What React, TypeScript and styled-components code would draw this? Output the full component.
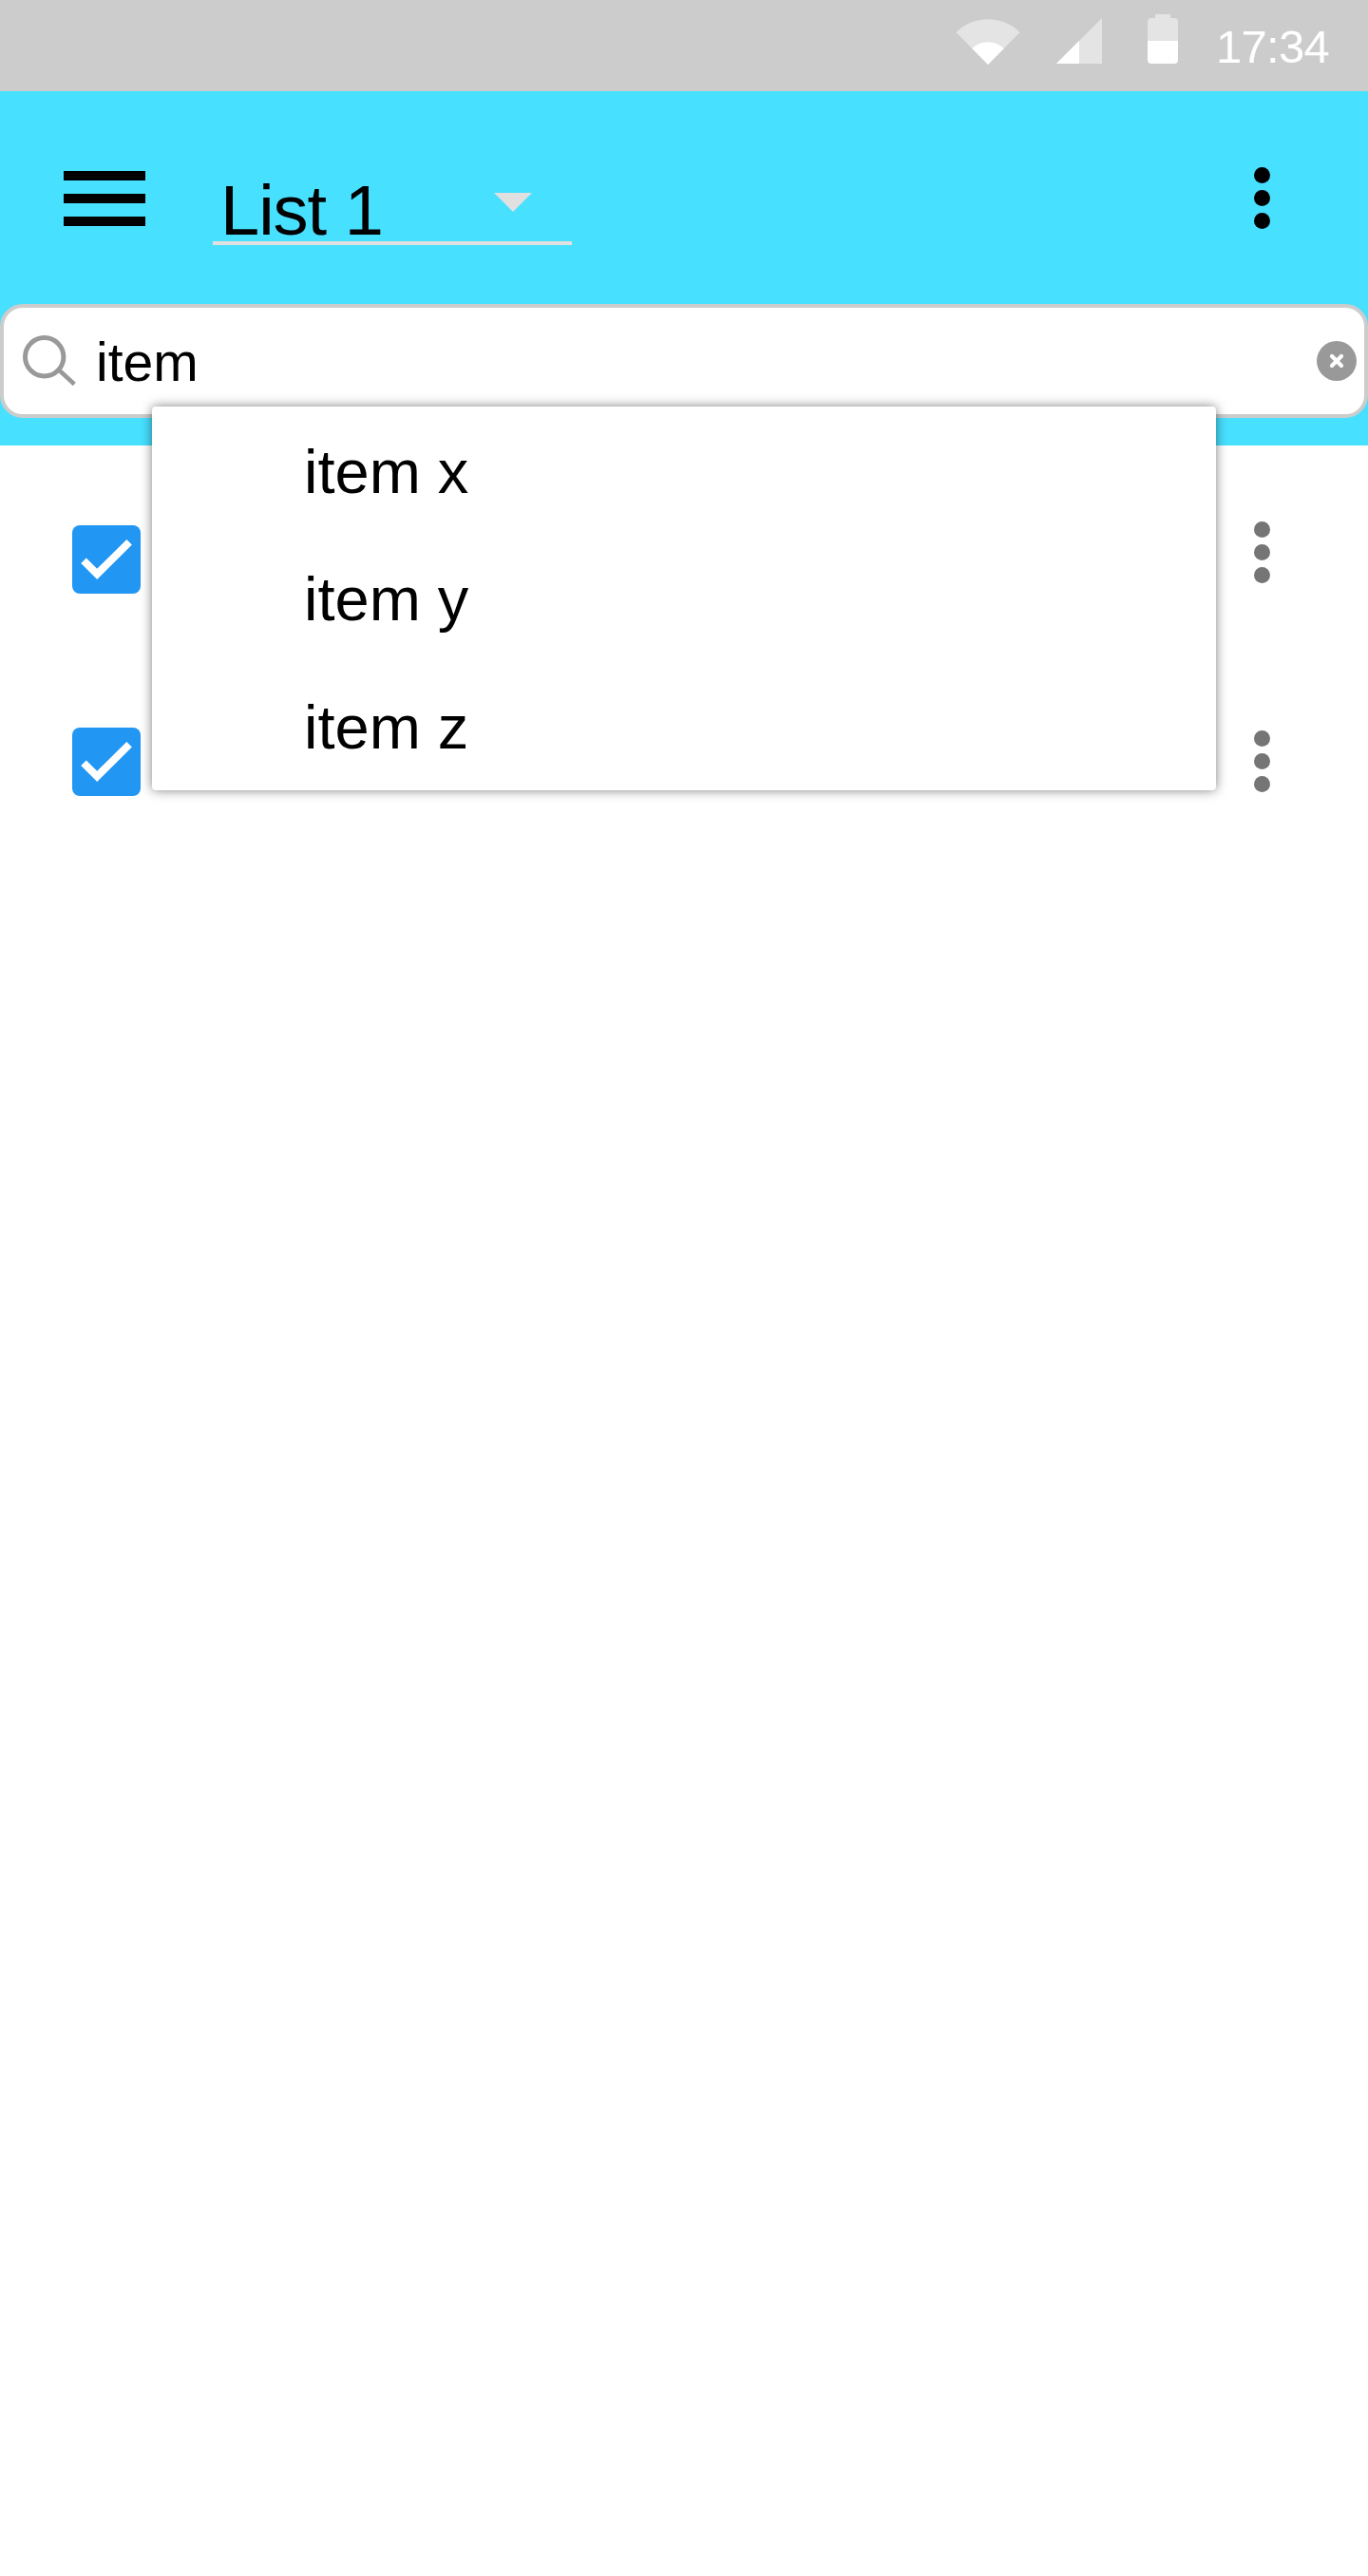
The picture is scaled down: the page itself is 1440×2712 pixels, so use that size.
import React from "react";
import styled, { createGlobalStyle } from "styled-components";

const GlobalStyle = createGlobalStyle`
  * { box-sizing: border-box; }
  body {
    margin: 0;
    background: #fff;
    font-family: "Liberation Sans", Arial, sans-serif;
    color: #000;
  }
`;

const Screen = styled.div`
  width: 1440px;
  height: 2712px;
  background: #fff;
  overflow: hidden;
`;

const StatusBar = styled.div`
  height: 96px;
  background: #ccc;
  display: flex;
  align-items: flex-start;
  justify-content: flex-end;
  padding: 13px 40px 0 0;
`;

const StatusIcons = styled.svg`
  display: block;
  width: 240px;
  height: 56px;
  margin-right: 36px;
`;

const Clock = styled.time`
  width: 120px;
  font-size: 49px;
  letter-spacing: -0.7px;
  line-height: 56px;
  padding-top: 8px;
  color: #fff;
  white-space: nowrap;
`;

const Header = styled.header`
  height: 373px;
  background: #48e0ff;
`;

const Toolbar = styled.div`
  height: 224px;
  display: flex;
  align-items: flex-start;
  padding: 80px 103px 0 67px;
`;

const MenuButton = styled.button`
  display: flex;
  flex-direction: column;
  gap: 14px;
  width: 86px;
  margin-top: 4px;
  padding: 0;
  border: 0;
  background: none;
`;

const MenuBar = styled.span`
  height: 10px;
  background: #000;
`;

const ListSelect = styled.div`
  width: 378px;
  height: 82px;
  margin-left: 71px;
  padding: 5px 42px 0 8px;
  border-bottom: 4px solid #e0e0e0;
  display: flex;
  justify-content: space-between;
`;

const ListName = styled.span`
  padding-top: 1px;
  font-size: 74px;
  letter-spacing: -1px;
  line-height: 80px;
  white-space: nowrap;
`;

const Caret = styled.svg`
  width: 40px;
  height: 20px;
  margin-top: 22px;
`;

const DotsButton = styled.button<{ $color: string; $offset: number }>`
  display: flex;
  flex-direction: column;
  gap: 7px;
  padding: 0;
  border: 0;
  background: none;
  color: ${(p) => p.$color};
  margin-left: auto;
  margin-top: ${(p) => p.$offset}px;
`;

const Dot = styled.span`
  width: 17px;
  height: 17px;
  border-radius: 50%;
  background: currentColor;
`;

const SearchArea = styled.div`
  position: relative;
`;

const SearchField = styled.div`
  height: 120px;
  border: 4px solid #ccc;
  border-radius: 24px;
  background: #fff;
  display: flex;
  align-items: center;
  padding: 0 8px 0 18px;
`;

const SearchIcon = styled.svg`
  width: 60px;
  height: 56px;
`;

const Query = styled.span`
  flex: 1;
  margin-left: 19px;
  padding-top: 2px;
  font-size: 57px;
  line-height: 64px;
`;

const ClearIcon = styled.svg`
  width: 42px;
  height: 42px;
`;

const Suggestions = styled.ul`
  position: absolute;
  z-index: 1;
  left: 160px;
  top: 107.6px;
  width: 1120px;
  margin: 0;
  padding: 0;
  list-style: none;
  background: #fff;
  border-radius: 4px;
  box-shadow: 0 0 12px rgba(0, 0, 0, 0.5);
`;

const Suggestion = styled.li`
  height: 134.8px;
  padding: 32px 0 0 160px;
  font-size: 65px;
  line-height: 74px;
`;

const Items = styled.main`
  display: flex;
  flex-direction: column;
  gap: 131px;
  padding: 80px 103px 0 76px;
`;

const ItemRow = styled.div`
  height: 82px;
  display: flex;
  align-items: flex-start;
`;

const Checkbox = styled.span`
  width: 72px;
  height: 72px;
  margin-top: 4px;
  border-radius: 8px;
  background: #2196f3;

  svg {
    display: block;
  }
`;

const Dots = ({ color, offset = 0 }: { color: string; offset?: number }) => (
  <DotsButton $color={color} $offset={offset} aria-label="More">
    <Dot />
    <Dot />
    <Dot />
  </DotsButton>
);

const suggestions = ["item x", "item y", "item z"];
const rows = [
  { id: 1, dotsOffset: 0 },
  { id: 2, dotsOffset: 7 },
];

export default function App() {
  return (
    <Screen>
      <GlobalStyle />
      <StatusBar>
        <StatusIcons viewBox="1004 13 240 56">
          <path d="M1040 68L1006.4 34A48 48 0 0 1 1073.6 34Z" fill="#e4e4e4" />
          <path d="M1040 68L1023.2 51A24 24 0 0 1 1056.8 51Z" fill="#fff" />
          <path d="M1112 67L1160 19V67Z" fill="#e4e4e4" />
          <path d="M1112 67L1136 43V67Z" fill="#fff" />
          <path d="M1208 43V23Q1208 19 1212 19H1216V15H1232V19H1236Q1240 19 1240 23V43Z" fill="#e4e4e4" />
          <path d="M1208 43H1240V63Q1240 67 1236 67H1212Q1208 67 1208 63Z" fill="#fff" />
        </StatusIcons>
        <Clock>17:34</Clock>
      </StatusBar>
      <Header>
        <Toolbar>
          <MenuButton aria-label="Menu">
            <MenuBar />
            <MenuBar />
            <MenuBar />
          </MenuButton>
          <ListSelect>
            <ListName>List 1</ListName>
            <Caret viewBox="0 0 40 20">
              <path d="M0 0H40L20 20Z" fill="#e0e0e0" />
            </Caret>
          </ListSelect>
          <Dots color="#000" />
        </Toolbar>
        <SearchArea>
          <SearchField>
            <SearchIcon viewBox="22 352 60 56" fill="none" stroke="#999">
              <circle cx="46.7" cy="375.8" r="20.2" strokeWidth="5" />
              <path d="M62 389.5L78.3 404.5" strokeWidth="4.5" />
            </SearchIcon>
            <Query>item</Query>
            <ClearIcon viewBox="0 0 42 42">
              <circle cx="21" cy="21" r="21" fill="#999" />
              <path d="M16 16L26 26M26 16L16 26" stroke="#fff" strokeWidth="4.2" strokeLinecap="round" />
            </ClearIcon>
          </SearchField>
          <Suggestions>
            {suggestions.map((label) => (
              <Suggestion key={label}>{label}</Suggestion>
            ))}
          </Suggestions>
        </SearchArea>
      </Header>
      <Items>
        {rows.map((row) => (
          <ItemRow key={row.id}>
            <Checkbox>
              <svg width="72" height="72" viewBox="0 0 72 72">
                <path d="M26.2 57L9.2 40L14.8 34.4L26.2 45.7L57.3 14.9L62.9 20.4Z" fill="#fff" />
              </svg>
            </Checkbox>
            <Dots color="#757575" offset={row.dotsOffset} />
          </ItemRow>
        ))}
      </Items>
    </Screen>
  );
}
